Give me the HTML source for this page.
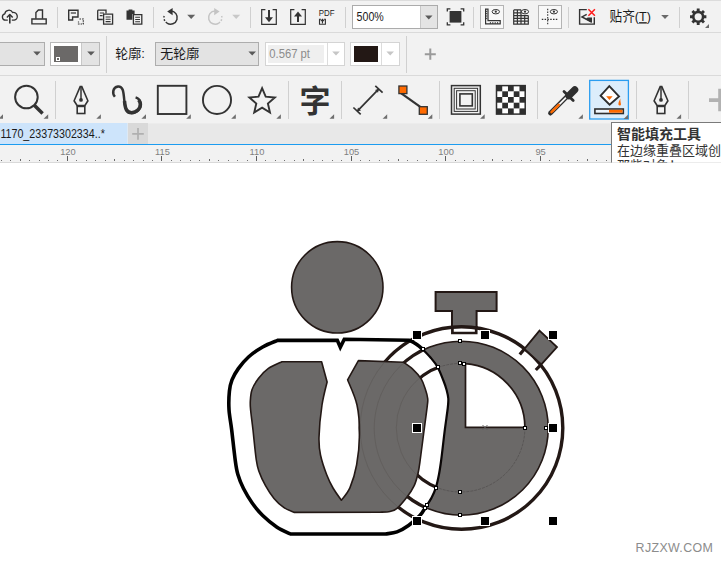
<!DOCTYPE html>
<html lang="zh-CN"><head><meta charset="utf-8"><title>CorelDRAW</title>
<style>
html,body{margin:0;padding:0;background:#fff;}
body{width:721px;height:562px;overflow:hidden;position:relative;font-family:"Liberation Sans","Noto Sans CJK SC",sans-serif;}
svg{position:absolute;left:0;top:0;display:block;}
text{font-family:"Liberation Sans","Noto Sans CJK SC",sans-serif;}
.t{position:absolute;white-space:nowrap;line-height:1;}
</style></head>
<body>
<svg id="ui" width="721" height="562" viewBox="0 0 721 562">
<!-- ===== BACKGROUNDS ===== -->
<g shape-rendering="crispEdges">
<rect x="0" y="0" width="721" height="123" fill="#f2f2f2"/><rect x="0" y="0" width="721" height="1" fill="#dcdcdc"/>
<rect x="0" y="32" width="721" height="1" fill="#dadada"/>
<rect x="0" y="75" width="721" height="1" fill="#dadada"/>
<rect x="0" y="123" width="721" height="21" fill="#e8e8e8"/><rect x="0" y="123" width="721" height="1" fill="#ececec"/>
<rect x="0" y="123" width="128" height="21" fill="#cde4fb"/>
<rect x="127" y="123" width="1" height="21" fill="#dde9f5"/><rect x="128" y="123" width="20" height="21" fill="#d9d9d9"/>
<rect x="0" y="144" width="721" height="1" fill="#1c9cf0"/>
<rect x="0" y="145" width="721" height="17" fill="#f2f2f2"/>
<rect x="0" y="162" width="721" height="1" fill="#d9d9d9"/>
</g>
<!-- ===== ROW1 ===== -->
<g id="row1">
<g fill="none" stroke="#333" stroke-width="1.3" stroke-linejoin="round"><path d="M7.8,20.2 H5.6 A3.2,3.2 0 0 1 4.8,13.9 A4.1,4.1 0 0 1 12.6,12.6 A3.8,3.8 0 0 1 14.2,20.2 H11.8"/><path d="M9.8,23.4 V15" stroke-width="1.6"/><path d="M6.9,17.6 L9.8,14.6 L12.7,17.6" stroke-width="1.5"/></g>
<g fill="none" stroke="#333" stroke-width="1.4" stroke-linejoin="miter"><path d="M35.9,18.8 V12.6 L38.4,10 H42.5 V18.8"/><path d="M31.9,19 H46.2 V23.9 H31.9 Z"/></g>
<rect x="57" y="7" width="1" height="21" fill="#d0d0d0" shape-rendering="crispEdges"/>
<g fill="none" stroke="#333" stroke-width="1.4"><path d="M68.7,10.2 H78 V17 H72.6 V20 H68.7 Z"/><path d="M70.8,13 H76" stroke-width="1.2"/><path d="M79.5,19 H83.3 V24 H78.5 V21.5" stroke-dasharray="1.5 1" stroke-width="1.2"/></g>
<g fill="none" stroke="#333" stroke-width="1.3"><path d="M97.7,10.2 H106 V13.5 M97.7,10.2 V19.5 H102.8"/><path d="M99.8,13 H104 M99.8,15.6 H102.6" stroke-width="1.1"/><path d="M103.6,14.2 H112.6 V24.2 H103.6 Z"/><path d="M105.6,17 H110.6 M105.6,19.3 H110.6 M105.6,21.6 H110.6" stroke-width="1.1"/></g>
<path d="M126.5,10.6 H128.6 V9.6 H132.4 V10.6 H134.6 V14 H132.4 V19.8 H126.5 Z" fill="#333"/><g fill="none" stroke="#333" stroke-width="1.3"><path d="M133.4,14.6 H141.8 V24.2 H133.4 Z"/><path d="M135.2,17.2 H140 M135.2,19.5 H140 M135.2,21.8 H140" stroke-width="1.1"/></g>
<rect x="153" y="7" width="1" height="21" fill="#d0d0d0" shape-rendering="crispEdges"/>
<g fill="none" stroke="#333" stroke-width="1.45"><path d="M170.6,11 A6.6,6.6 0 1 1 167,23.1"/><path d="M167,23.1 A6.6,6.6 0 0 1 164.3,15.4" stroke-dasharray="1.6 1.6"/></g><path d="M167.2,11.6 L172.6,8 V15.2 Z" fill="#333"/>
<path d="M187.2,14.799999999999999 h8 l-4.0,4.2 Z" fill="#626262"/>
<g fill="none" stroke="#c4c4c4" stroke-width="1.45"><path d="M215.2,11 A6.6,6.6 0 1 0 218.8,23.1"/><path d="M218.8,23.1 A6.6,6.6 0 0 0 221.5,15.4" stroke-dasharray="1.6 1.6"/></g><path d="M219.6,11.6 L214.2,8 V15.2 Z" fill="#c4c4c4"/>
<path d="M232.2,14.799999999999999 h8 l-4.0,4.2 Z" fill="#c8c8c8"/>
<rect x="250" y="7" width="1" height="21" fill="#d0d0d0" shape-rendering="crispEdges"/>
<g fill="none" stroke="#333"><path d="M265.4,9.6 H261.7 V24.4 H276.3 V9.6 H272.6" stroke-width="1.2"/><path d="M269,10 V19" stroke-width="2"/></g><path d="M265,17.2 H273 L269,22.2 Z" fill="#333"/>
<g fill="none" stroke="#333"><path d="M294.4,9.6 H290.7 V24.4 H305.3 V9.6 H301.6" stroke-width="1.2"/><path d="M298,15 V22" stroke-width="2"/></g><path d="M294,16.6 H302 L298,11.6 Z" fill="#333"/>
<text x="318.8" y="15.7" font-size="8.2" fill="#222" textLength="15.8" lengthAdjust="spacingAndGlyphs">PDF</text>
<g fill="none" stroke="#333" stroke-width="1.1"><path d="M321,19.3 H319.5 V24.2 H325.4 V19.3 H323.9"/><path d="M322.45,23.4 V19.6 M320.8,21.2 L322.45,19.4 L324.1,21.2"/></g>
<rect x="345" y="7" width="1" height="21" fill="#d0d0d0" shape-rendering="crispEdges"/>
<g shape-rendering="crispEdges"><rect x="352.5" y="5.5" width="85" height="23" fill="#fff" stroke="#ababab"/><rect x="420" y="6" width="17" height="22" fill="#e4e4e4"/><rect x="419.5" y="6" width="1" height="22" fill="#c8c8c8"/></g>
<text x="356.6" y="21.3" font-size="12.3" fill="#1a1a1a" textLength="27.2" lengthAdjust="spacingAndGlyphs">500%</text>
<path d="M425.1,15.399999999999999 h7.4 l-3.7,4 Z" fill="#5a5a5a"/>
<rect x="449.6" y="11" width="11.8" height="11.6" fill="#333"/><path d="M447.3,11.4 V8.8 H450.4 M460.6,8.8 H463.7 V11.4 M463.7,22.2 V24.8 H460.6 M450.4,24.8 H447.3 V22.2" fill="none" stroke="#333" stroke-width="1.3"/>
<rect x="473" y="7" width="1" height="21" fill="#d0d0d0" shape-rendering="crispEdges"/>
<rect x="480.5" y="5.5" width="23" height="23" fill="#f8f8f8" stroke="#b4b4b4" shape-rendering="crispEdges"/>
<g fill="none" stroke="#333"><path d="M485.6,9.2 H488 V20.6 H500.2 V23.8 H485.6 Z" stroke-width="1.2"/><path d="M490.4,23.8 v-1.8 M492.8,23.8 v-1.8 M495.2,23.8 v-1.8 M497.6,23.8 v-1.8 M485.6,18.4 h1.6 M485.6,16 h1.6 M485.6,13.6 h1.6 M485.6,11.4 h1.6" stroke-width="0.9"/><ellipse cx="495.8" cy="11.7" rx="3.7" ry="2.2" stroke-width="1"/></g><circle cx="495.8" cy="11.7" r="1.1" fill="#333"/>
<g fill="none" stroke="#333" stroke-width="1.2"><path d="M513.7,9.9 V24.1 H528.3 V15.6 M513.7,12.8 H521.2 M513.7,15.6 H528.3 M513.7,18.4 H528.3 M513.7,21.2 H528.3 M513.7,9.9 H521.2 M517.4,9.9 V24.1 M521,9.9 V24.1 M524.7,15.6 V24.1"/><ellipse cx="525" cy="11.7" rx="3.6" ry="2.2" stroke-width="1"/></g><circle cx="525" cy="11.7" r="1.1" fill="#333"/>
<rect x="538.5" y="5.5" width="23" height="23" fill="#f8f8f8" stroke="#b4b4b4" shape-rendering="crispEdges"/>
<g fill="none" stroke="#333" stroke-width="1.1"><path d="M547.7,8.7 V25" stroke-dasharray="1.5 1.3"/><path d="M541.8,19.4 H558.4" stroke-dasharray="1.5 1.3"/><ellipse cx="553.9" cy="11.7" rx="3.6" ry="2.2" stroke-width="1"/></g><circle cx="553.9" cy="11.7" r="1.1" fill="#333"/>
<rect x="568" y="7" width="1" height="21" fill="#d0d0d0" shape-rendering="crispEdges"/>
<g fill="none" stroke="#333" stroke-width="1.4"><path d="M586.8,9.6 H579.6 V24.1 H594.3 V17.2"/><path d="M586.7,14.4 L582,16.9 L591.6,22" stroke-width="1.5"/></g><path d="M587.6,17.6 H592 V22.8 L585.6,19.2 Z" fill="#333"/><path d="M588.4,9.2 L594.9,15.7 M594.9,9.2 L588.4,15.7" stroke="#ff1a1a" stroke-width="1.5" fill="none"/>
<text x="609.6" y="21.2" font-size="13.4" fill="#1a1a1a" textLength="41.4" lengthAdjust="spacingAndGlyphs">贴齐(<tspan text-decoration="underline">T</tspan>)</text>
<path d="M661.2,15.0 h7.6 l-3.8,4 Z" fill="#6a6a6a"/>
<rect x="679" y="7" width="1" height="21" fill="#d0d0d0" shape-rendering="crispEdges"/>
<path d="M696.77,8.62 L699.63,8.62 L699.65,10.77 L701.44,11.51 L702.97,10.01 L704.99,12.03 L703.49,13.56 L704.23,15.35 L706.38,15.37 L706.38,18.23 L704.23,18.25 L703.49,20.04 L704.99,21.57 L702.97,23.59 L701.44,22.09 L699.65,22.83 L699.63,24.98 L696.77,24.98 L696.75,22.83 L694.96,22.09 L693.43,23.59 L691.41,21.57 L692.91,20.04 L692.17,18.25 L690.02,18.23 L690.02,15.37 L692.17,15.35 L692.91,13.56 L691.41,12.03 L693.43,10.01 L694.96,11.51 L696.75,10.77 Z" fill="#333"/><circle cx="698.2" cy="16.8" r="3.6" fill="#f2f2f2"/>
<path d="M709,28 L705,28 L709,24 Z" fill="#6a6a6a"/>
</g><!--/row1-->
<!-- ===== ROW2 ===== -->
<g id="row2">
<g shape-rendering="crispEdges"><rect x="-1.5" y="42.5" width="46" height="23" fill="#e3e3e3" stroke="#adadad"/><rect x="50.5" y="42.5" width="49" height="23" fill="#fff" stroke="#b8b8b8"/><rect x="81" y="43" width="18" height="22" fill="#e3e3e3"/><rect x="81" y="43" width="1" height="22" fill="#c8c8c8"/><rect x="54" y="46" width="24" height="16" fill="#6b6968"/><rect x="56.5" y="57.5" width="3" height="3" fill="#6b6968" stroke="#fff"/><rect x="155.5" y="42.5" width="103" height="23" fill="#e3e3e3" stroke="#adadad"/><rect x="265.5" y="42.5" width="79" height="23" fill="#fff" stroke="#d4d4d4"/><rect x="268" y="45" width="56" height="18" fill="#efefef"/><rect x="327" y="43" width="1" height="22" fill="#dcdcdc"/><rect x="350.5" y="42.5" width="49" height="23" fill="#fff" stroke="#d4d4d4"/><rect x="354" y="46" width="24" height="16" fill="#231815"/><rect x="381" y="43" width="1" height="22" fill="#dcdcdc"/></g>
<path d="M33.2,51.4 h7.6 l-3.8,4 Z" fill="#5a5a5a"/>
<path d="M87.2,51.4 h7.6 l-3.8,4 Z" fill="#5a5a5a"/>
<rect x="106" y="36" width="1" height="37" fill="#d0d0d0" shape-rendering="crispEdges"/>
<text x="115.2" y="58.2" font-size="13" fill="#1a1a1a">轮廓:</text>
<text x="160.2" y="58.2" font-size="13" fill="#1a1a1a">无轮廓</text>
<path d="M248.39999999999998,51.4 h7.6 l-3.8,4 Z" fill="#5a5a5a"/>
<text x="269.3" y="58" font-size="12.3" fill="#8c8c8c" textLength="40.7" lengthAdjust="spacingAndGlyphs">0.567 pt</text>
<path d="M332.2,51.4 h7.6 l-3.8,4 Z" fill="#c6c6c6"/>
<path d="M386.4,51.4 h7.6 l-3.8,4 Z" fill="#c6c6c6"/>
<rect x="406" y="36" width="1" height="37" fill="#d0d0d0" shape-rendering="crispEdges"/>
<path d="M424.8,54.2 H435.8 M430.3,48.6 V59.8" stroke="#9a9a9a" stroke-width="2" fill="none"/>
</g><!--/row2-->
<!-- ===== ROW3 ===== -->
<g id="row3">
<path d="M3,118.8 L-1.5999999999999996,118.8 L3,114.2 Z" fill="#6e6e6e"/>
<circle cx="26.4" cy="97" r="11.3" fill="none" stroke="#333" stroke-width="2"/><path d="M34.3,105.2 L42.6,113.5" stroke="#333" stroke-width="3.5" fill="none"/>
<path d="M48.2,118.8 L43.6,118.8 L48.2,114.2 Z" fill="#6e6e6e"/>
<rect x="55" y="81" width="1" height="38" fill="#d0d0d0" shape-rendering="crispEdges"/>
<g fill="none" stroke="#333" stroke-width="1.6" stroke-linejoin="miter"><path d="M80.2,86.6 H81.8 L87.9,100.8 L84.8,105.6 H77.2 L74.1,100.8 Z"/><path d="M81.0,86.6 V99" stroke-width="1.5"/><rect x="77.2" y="106.4" width="7.6" height="7.1" /></g><circle cx="81.0" cy="99.9" r="1.9" fill="#333"/>
<path d="M100.9,118.8 L96.30000000000001,118.8 L100.9,114.2 Z" fill="#6e6e6e"/>
<path d="M114.9,96.8 C112.2,93.6 112.4,87.2 118,86.4 C122.8,86 123.4,91.4 124,97.4 C124.6,104 125.2,112.9 131.6,112.9 C137.4,112.9 141.6,108 140.8,103.2 C140.2,100.2 138.2,98.2 135.6,97.4" fill="none" stroke="#333" stroke-width="2.5"/><path d="M124.5,101 C125.2,109.4 126.8,112.7 131.6,112.7 C136.6,112.7 140.4,108.6 140.3,104.2 C140.2,102.4 139.6,101 138.6,99.8" fill="none" stroke="#333" stroke-width="3.5"/>
<path d="M146,118.8 L141.4,118.8 L146,114.2 Z" fill="#6e6e6e"/>
<rect x="157.8" y="85.8" width="28.6" height="28.2" fill="none" stroke="#333" stroke-width="1.9"/>
<path d="M190.8,118.8 L186.20000000000002,118.8 L190.8,114.2 Z" fill="#6e6e6e"/>
<circle cx="217" cy="99.9" r="14.05" fill="none" stroke="#333" stroke-width="1.9"/>
<path d="M235.8,118.8 L231.20000000000002,118.8 L235.8,114.2 Z" fill="#6e6e6e"/>
<path d="M262.10,88.20 L265.69,96.66 L274.84,97.46 L267.90,103.49 L269.98,112.44 L262.10,107.70 L254.22,112.44 L256.30,103.49 L249.36,97.46 L258.51,96.66 Z" fill="none" stroke="#333" stroke-width="1.9" stroke-linejoin="miter" stroke-miterlimit="3"/>
<path d="M280.9,118.8 L276.29999999999995,118.8 L280.9,114.2 Z" fill="#6e6e6e"/>
<rect x="288" y="81" width="1" height="38" fill="#d0d0d0" shape-rendering="crispEdges"/>
<text x="299.4" y="111.6" font-size="31" font-weight="bold" fill="#333">字</text>
<path d="M334.1,118.8 L329.5,118.8 L334.1,114.2 Z" fill="#6e6e6e"/>
<rect x="341" y="81" width="1" height="38" fill="#d0d0d0" shape-rendering="crispEdges"/>
<path d="M357.6,110.9 L378.4,89.4 M353.4,107.5 L360.7,114.4 M375.3,85.9 L382.6,92.6" fill="none" stroke="#333" stroke-width="1.7"/><path d="M357,111.6 L358,107.6 L361,110.4 Z M379,88.8 L378,92.8 L375,90 Z" fill="#333"/>
<path d="M387.2,118.8 L382.59999999999997,118.8 L387.2,114.2 Z" fill="#6e6e6e"/>
<path d="M400.6,92.8 L421,107.4" stroke="#333" stroke-width="2.2" fill="none"/><rect x="398.9" y="86" width="8" height="7.6" fill="#ff6a00" stroke="#333" stroke-width="1.3"/><rect x="419.3" y="106.7" width="8" height="7.6" fill="#ff6a00" stroke="#333" stroke-width="1.3"/>
<path d="M432.3,118.8 L427.7,118.8 L432.3,114.2 Z" fill="#6e6e6e"/>
<rect x="439" y="81" width="1" height="38" fill="#d0d0d0" shape-rendering="crispEdges"/>
<g fill="none" stroke="#333"><rect x="451.5" y="85.6" width="28.8" height="28.5" stroke-width="1.5"/><rect x="454.2" y="88.3" width="23.4" height="23.1" stroke-width="1"/><rect x="456.6" y="90.7" width="18.6" height="18.3" stroke-width="1"/><rect x="459.9" y="93.9" width="12.4" height="12" stroke-width="1.6"/></g>
<path d="M484.7,118.8 L480.09999999999997,118.8 L484.7,114.2 Z" fill="#6e6e6e"/>
<rect x="496.5" y="85.6" width="28.7" height="28.5" fill="#fff" stroke="#2e2e2e" stroke-width="1.5"/><rect x="496.50" y="85.60" width="5.74" height="5.70" fill="#2e2e2e"/><rect x="496.50" y="97.00" width="5.74" height="5.70" fill="#2e2e2e"/><rect x="496.50" y="108.40" width="5.74" height="5.70" fill="#2e2e2e"/><rect x="502.24" y="91.30" width="5.74" height="5.70" fill="#2e2e2e"/><rect x="502.24" y="102.70" width="5.74" height="5.70" fill="#2e2e2e"/><rect x="507.98" y="85.60" width="5.74" height="5.70" fill="#2e2e2e"/><rect x="507.98" y="97.00" width="5.74" height="5.70" fill="#2e2e2e"/><rect x="507.98" y="108.40" width="5.74" height="5.70" fill="#2e2e2e"/><rect x="513.72" y="91.30" width="5.74" height="5.70" fill="#2e2e2e"/><rect x="513.72" y="102.70" width="5.74" height="5.70" fill="#2e2e2e"/><rect x="519.46" y="85.60" width="5.74" height="5.70" fill="#2e2e2e"/><rect x="519.46" y="97.00" width="5.74" height="5.70" fill="#2e2e2e"/><rect x="519.46" y="108.40" width="5.74" height="5.70" fill="#2e2e2e"/>
<rect x="537" y="81" width="1" height="38" fill="#d0d0d0" shape-rendering="crispEdges"/>
<g><path d="M550.4,113.2 L567.4,96.2" stroke="#2e2e2e" stroke-width="4.6" stroke-linecap="round"/><path d="M552.6,111 L567,96.6" stroke="#f6f6f6" stroke-width="1.8"/><path d="M551.4,112.2 L558.8,104.8" stroke="#ff6a00" stroke-width="2.4" stroke-linecap="round"/><path d="M564,91.4 L573.2,100.6" stroke="#2e2e2e" stroke-width="2.8" stroke-linecap="round"/><path d="M568.8,95.8 L574.8,89.8" stroke="#2e2e2e" stroke-width="7" stroke-linecap="round"/></g>
<path d="M582.9,118.8 L578.3,118.8 L582.9,114.2 Z" fill="#6e6e6e"/>
<rect x="589.7" y="80.4" width="38.7" height="38.6" fill="#dcedfb" stroke="#2a9df0" stroke-width="1.3"/>
<g><path d="M609.3,86.2 L619,96.4 L609.6,104.6 L600.6,95.6 Z" fill="#fff" stroke="#2e2e2e" stroke-width="1.9" stroke-linejoin="miter"/><path d="M606.2,96.2 H612.6 L609.4,100 Z" fill="#ff6a00"/><path d="M620.4,98.4 C619.4,100.4 618.2,102.4 618.4,104.6 C619,106 621,105.6 621,104.2 C620.6,102 620.2,100.4 620.4,98.4 Z" fill="#ff6a00"/><rect x="594.9" y="109" width="28.4" height="4.5" fill="#eef6fd" stroke="#2e2e2e" stroke-width="1.6"/><rect x="609" y="109.8" width="13.5" height="2.9" fill="#ff6a00"/></g>
<path d="M628.2,119 L623.6,119 L628.2,114.4 Z" fill="#6e6e6e"/>
<rect x="636" y="81" width="1" height="38" fill="#d0d0d0" shape-rendering="crispEdges"/>
<g fill="none" stroke="#333" stroke-width="1.6" stroke-linejoin="miter"><path d="M660.2,86.6 H661.8 L667.9,100.8 L664.8,105.6 H657.2 L654.1,100.8 Z"/><path d="M661.0,86.6 V99" stroke-width="1.5"/><rect x="657.2" y="106.4" width="7.6" height="7.1" /></g><circle cx="661.0" cy="99.9" r="1.9" fill="#333"/>
<path d="M681.1,118.8 L676.5,118.8 L681.1,114.2 Z" fill="#6e6e6e"/>
<rect x="688" y="81" width="1" height="38" fill="#d0d0d0" shape-rendering="crispEdges"/>
<path d="M709,100.1 H721 M720,88.7 V111.2" stroke="#b2b2b2" stroke-width="3.6" fill="none"/>
<text x="0.4" y="137.8" font-size="12" fill="#1a1a1a" textLength="104.4" lengthAdjust="spacingAndGlyphs">1170_23373302334..*</text>
<path d="M132.2,133.9 H143.8 M138,128.1 V139.7" stroke="#b0b0b0" stroke-width="1.7" fill="none"/>
</g><!--/row3-->
<!-- ===== RULER ===== -->
<g id="ruler">
<g shape-rendering="crispEdges"><rect x="1" y="160" width="1" height="1" fill="#707070"/><rect x="10" y="160" width="1" height="1" fill="#707070"/><rect x="20" y="159" width="1" height="2" fill="#6a6a6a"/><rect x="29" y="160" width="1" height="1" fill="#707070"/><rect x="39" y="160" width="1" height="1" fill="#707070"/><rect x="48" y="160" width="1" height="1" fill="#707070"/><rect x="57" y="160" width="1" height="1" fill="#707070"/><rect x="67" y="156" width="1" height="5" fill="#5e5e5e"/><rect x="76" y="160" width="1" height="1" fill="#707070"/><rect x="86" y="160" width="1" height="1" fill="#707070"/><rect x="95" y="160" width="1" height="1" fill="#707070"/><rect x="105" y="160" width="1" height="1" fill="#707070"/><rect x="114" y="159" width="1" height="2" fill="#6a6a6a"/><rect x="124" y="160" width="1" height="1" fill="#707070"/><rect x="133" y="160" width="1" height="1" fill="#707070"/><rect x="143" y="160" width="1" height="1" fill="#707070"/><rect x="152" y="160" width="1" height="1" fill="#707070"/><rect x="161" y="156" width="1" height="5" fill="#5e5e5e"/><rect x="171" y="160" width="1" height="1" fill="#707070"/><rect x="180" y="160" width="1" height="1" fill="#707070"/><rect x="190" y="160" width="1" height="1" fill="#707070"/><rect x="199" y="160" width="1" height="1" fill="#707070"/><rect x="209" y="159" width="1" height="2" fill="#6a6a6a"/><rect x="218" y="160" width="1" height="1" fill="#707070"/><rect x="228" y="160" width="1" height="1" fill="#707070"/><rect x="237" y="160" width="1" height="1" fill="#707070"/><rect x="247" y="160" width="1" height="1" fill="#707070"/><rect x="256" y="156" width="1" height="5" fill="#5e5e5e"/><rect x="265" y="160" width="1" height="1" fill="#707070"/><rect x="275" y="160" width="1" height="1" fill="#707070"/><rect x="284" y="160" width="1" height="1" fill="#707070"/><rect x="294" y="160" width="1" height="1" fill="#707070"/><rect x="303" y="159" width="1" height="2" fill="#6a6a6a"/><rect x="313" y="160" width="1" height="1" fill="#707070"/><rect x="322" y="160" width="1" height="1" fill="#707070"/><rect x="332" y="160" width="1" height="1" fill="#707070"/><rect x="341" y="160" width="1" height="1" fill="#707070"/><rect x="351" y="156" width="1" height="5" fill="#5e5e5e"/><rect x="360" y="160" width="1" height="1" fill="#707070"/><rect x="369" y="160" width="1" height="1" fill="#707070"/><rect x="379" y="160" width="1" height="1" fill="#707070"/><rect x="388" y="160" width="1" height="1" fill="#707070"/><rect x="398" y="159" width="1" height="2" fill="#6a6a6a"/><rect x="407" y="160" width="1" height="1" fill="#707070"/><rect x="417" y="160" width="1" height="1" fill="#707070"/><rect x="426" y="160" width="1" height="1" fill="#707070"/><rect x="436" y="160" width="1" height="1" fill="#707070"/><rect x="445" y="156" width="1" height="5" fill="#5e5e5e"/><rect x="455" y="160" width="1" height="1" fill="#707070"/><rect x="464" y="160" width="1" height="1" fill="#707070"/><rect x="473" y="160" width="1" height="1" fill="#707070"/><rect x="483" y="160" width="1" height="1" fill="#707070"/><rect x="492" y="159" width="1" height="2" fill="#6a6a6a"/><rect x="502" y="160" width="1" height="1" fill="#707070"/><rect x="511" y="160" width="1" height="1" fill="#707070"/><rect x="521" y="160" width="1" height="1" fill="#707070"/><rect x="530" y="160" width="1" height="1" fill="#707070"/><rect x="540" y="156" width="1" height="5" fill="#5e5e5e"/><rect x="549" y="160" width="1" height="1" fill="#707070"/><rect x="559" y="160" width="1" height="1" fill="#707070"/><rect x="568" y="160" width="1" height="1" fill="#707070"/><rect x="577" y="160" width="1" height="1" fill="#707070"/><rect x="587" y="159" width="1" height="2" fill="#6a6a6a"/><rect x="596" y="160" width="1" height="1" fill="#707070"/><rect x="606" y="160" width="1" height="1" fill="#707070"/></g>
<text x="67.9" y="154.7" font-size="9.3" fill="#808080" text-anchor="middle">120</text>
<text x="162.4" y="154.7" font-size="9.3" fill="#808080" text-anchor="middle">115</text>
<text x="257.0" y="154.7" font-size="9.3" fill="#808080" text-anchor="middle">110</text>
<text x="351.5" y="154.7" font-size="9.3" fill="#808080" text-anchor="middle">105</text>
<text x="446.1" y="154.7" font-size="9.3" fill="#808080" text-anchor="middle">100</text>
<text x="540.6" y="154.7" font-size="9.3" fill="#808080" text-anchor="middle">95</text>
</g><!--/ruler-->
<!-- ===== TOOLTIP ===== -->
<g id="tip">
<defs><clipPath id="cpTip"><rect x="611" y="122" width="110" height="40.6"/></clipPath></defs>
<g clip-path="url(#cpTip)"><rect x="611.5" y="122.5" width="120" height="60" fill="#fff" stroke="#7a7a7a" shape-rendering="crispEdges"/><text x="617" y="139.2" font-size="14" font-weight="bold" fill="#333">智能填充工具</text><text x="617" y="155" font-size="13" fill="#333">在边缘重叠区域创</text><text x="617" y="170.4" font-size="13" fill="#333">那些对象！</text></g>
<text x="635.6" y="552.2" font-size="12.4" fill="#8c8c8c" textLength="77.2" lengthAdjust="spacing">RJZXW.COM</text>
</g><!--/tip-->
<!-- ===== ART ===== -->
<g id="art">
<defs><clipPath id="cpOut"><path d="M277.6,340.4 L337.3,340.4 L340.3,347.3 L344.3,339.2 L409.2,340.3 C409.8,340.6 411.3,341.2 412.7,342.0 C414.1,342.8 415.8,343.8 417.5,345.0 C419.2,346.2 421.8,348.5 422.7,349.2 C424.0,350.6 428.0,354.5 430.5,357.5 C433.0,360.5 435.6,363.4 437.7,367.2 C439.8,371.0 441.9,376.7 443.4,380.5 C444.9,384.3 445.8,387.0 446.6,390.0 C447.4,393.0 448.1,395.4 448.3,398.5 C448.5,401.6 448.3,403.3 447.7,408.5 C447.1,413.7 445.9,421.3 444.8,429.9 C443.7,438.5 442.2,452.6 441.2,460.0 C440.2,467.4 439.9,469.6 439.0,474.2 C438.1,478.8 437.1,483.8 435.8,487.8 C434.5,491.8 432.9,495.1 431.2,498.4 C429.4,501.7 426.3,506.1 425.3,507.7 C424.4,509.0 422.7,512.5 419.9,515.5 C417.1,518.5 412.3,522.8 408.5,525.5 C404.7,528.2 400.8,530.5 397.0,531.9 C393.2,533.3 387.6,533.6 385.7,534.0 L290.5,534.0 C288.2,532.9 281.6,530.3 277.0,527.2 C272.4,524.1 266.9,519.6 262.7,515.5 C258.5,511.4 255.2,507.2 252.0,502.7 C248.8,498.2 245.9,493.2 243.5,488.5 C241.1,483.8 239.2,478.9 237.8,474.2 C236.4,469.4 236.2,467.4 235.2,460.0 C234.2,452.6 232.7,438.4 231.7,430.0 C230.7,421.6 229.4,416.2 229.0,409.7 C228.6,403.2 228.9,396.2 229.4,391.2 C229.9,386.2 230.5,383.6 232.0,379.8 C233.5,376.0 235.8,372.2 238.5,368.4 C241.2,364.6 244.5,360.6 248.5,357.0 C252.5,353.4 257.8,349.8 262.7,347.0 C267.6,344.2 275.1,341.5 277.6,340.4 Z"/></clipPath><clipPath id="cpBody"><path d="M281.9,361.7 L321.6,361.7 L327.1,382.0 C326.2,385.8 323.4,395.7 322.0,405.0 C320.6,414.3 319.2,429.3 319.0,437.6 C318.8,445.9 319.2,448.8 320.5,455.0 C321.8,461.2 324.6,469.3 326.7,474.8 C328.8,480.3 330.6,483.8 333.0,488.0 C335.4,492.2 340.0,498.2 341.4,500.2 C342.8,498.1 347.5,493.5 350.0,487.6 C352.5,481.7 355.0,473.8 356.6,465.0 C358.2,456.2 359.4,444.6 359.5,434.6 C359.6,424.6 359.0,414.1 357.0,405.0 C355.0,395.9 349.2,384.0 347.6,379.8 L358.4,360.6 L403.5,362.3 C405.0,363.4 409.7,366.3 412.7,369.1 C415.7,371.9 419.1,375.6 421.3,379.1 C423.5,382.6 424.5,386.8 425.6,390.0 C426.7,393.2 427.4,395.9 427.7,398.5 C428.0,401.1 427.8,401.2 427.3,405.7 C426.8,410.2 425.6,418.7 424.7,425.6 C423.8,432.5 422.6,441.3 421.9,447.0 C421.1,452.7 420.8,455.7 420.2,460.0 C419.6,464.3 419.1,468.7 418.1,473.0 C417.1,477.3 416.1,481.6 414.2,485.6 C412.3,489.6 409.9,493.2 407.0,497.0 C404.1,500.8 399.8,506.0 397.0,508.4 C394.2,510.8 392.8,510.9 390.0,511.5 C387.2,512.1 381.7,512.1 380.0,512.2 L294.0,512.4 C292.3,511.6 287.3,510.0 284.0,507.7 C280.7,505.4 277.1,502.1 274.0,498.4 C270.9,494.7 268.0,490.1 265.5,485.6 C263.0,481.1 260.5,475.7 259.0,471.4 C257.5,467.1 257.3,466.9 256.3,460.0 C255.3,453.1 253.9,438.4 253.0,430.0 C252.1,421.6 251.0,414.5 250.6,409.7 C250.2,404.9 250.1,404.5 250.3,401.2 C250.5,397.9 250.7,393.6 252.0,389.8 C253.3,386.0 255.7,382.0 258.4,378.4 C261.1,374.8 264.5,371.2 268.4,368.4 C272.3,365.6 279.6,362.8 281.9,361.7 Z"/></clipPath></defs>
<circle cx="337.3" cy="287.3" r="45.7" fill="#6b6968" stroke="#231815" stroke-width="1.6"/>
<circle cx="461.2" cy="428.2" r="87" fill="#6b6968" stroke="#231815" stroke-width="1.6"/>
<circle cx="460.6" cy="427.7" r="64.3" fill="none" stroke="#474342" stroke-width="0.5" stroke-dasharray="3 1"/>
<path d="M465.5,427.3 L465.5,363.6 A64.3,64.3 0 0 1 524.9,427.3 Z" fill="#fff" stroke="#231815" stroke-width="1.7" stroke-linejoin="miter"/>
<path d="M435.6,292 H496.6 V311 H476.6 V327.5 H452 V311 H435.6 Z" fill="#6b6968" stroke="#231815" stroke-width="2"/>
<path d="M452.4,326 V333 H476.2 V326" fill="#fff" stroke="#231815" stroke-width="2.7"/>
<circle cx="461.5" cy="428" r="101.3" fill="none" stroke="#231815" stroke-width="3.4"/>
<path d="M519.8,354.5 L524.4,348.9 M535.8,370 L541.3,364.4" stroke="#231815" stroke-width="3.2" fill="none"/>
<path d="M539.5,330.6 L557,347 L541.3,364.4 L524.4,348.9 Z" fill="#6b6968" stroke="#231815" stroke-width="1.8"/>
<path d="M277.6,340.4 L337.3,340.4 L340.3,347.3 L344.3,339.2 L409.2,340.3 C409.8,340.6 411.3,341.2 412.7,342.0 C414.1,342.8 415.8,343.8 417.5,345.0 C419.2,346.2 421.8,348.5 422.7,349.2 C424.0,350.6 428.0,354.5 430.5,357.5 C433.0,360.5 435.6,363.4 437.7,367.2 C439.8,371.0 441.9,376.7 443.4,380.5 C444.9,384.3 445.8,387.0 446.6,390.0 C447.4,393.0 448.1,395.4 448.3,398.5 C448.5,401.6 448.3,403.3 447.7,408.5 C447.1,413.7 445.9,421.3 444.8,429.9 C443.7,438.5 442.2,452.6 441.2,460.0 C440.2,467.4 439.9,469.6 439.0,474.2 C438.1,478.8 437.1,483.8 435.8,487.8 C434.5,491.8 432.9,495.1 431.2,498.4 C429.4,501.7 426.3,506.1 425.3,507.7 C424.4,509.0 422.7,512.5 419.9,515.5 C417.1,518.5 412.3,522.8 408.5,525.5 C404.7,528.2 400.8,530.5 397.0,531.9 C393.2,533.3 387.6,533.6 385.7,534.0 L290.5,534.0 C288.2,532.9 281.6,530.3 277.0,527.2 C272.4,524.1 266.9,519.6 262.7,515.5 C258.5,511.4 255.2,507.2 252.0,502.7 C248.8,498.2 245.9,493.2 243.5,488.5 C241.1,483.8 239.2,478.9 237.8,474.2 C236.4,469.4 236.2,467.4 235.2,460.0 C234.2,452.6 232.7,438.4 231.7,430.0 C230.7,421.6 229.4,416.2 229.0,409.7 C228.6,403.2 228.9,396.2 229.4,391.2 C229.9,386.2 230.5,383.6 232.0,379.8 C233.5,376.0 235.8,372.2 238.5,368.4 C241.2,364.6 244.5,360.6 248.5,357.0 C252.5,353.4 257.8,349.8 262.7,347.0 C267.6,344.2 275.1,341.5 277.6,340.4 Z" fill="#fff"/>
<g clip-path="url(#cpOut)" fill="none" stroke="#231815" stroke-width="3.3"><circle cx="461.5" cy="428" r="101.3"/><circle cx="461.2" cy="428.2" r="87"/><circle cx="460.6" cy="427.7" r="64.3"/></g>
<path d="M281.9,361.7 L321.6,361.7 L327.1,382.0 C326.2,385.8 323.4,395.7 322.0,405.0 C320.6,414.3 319.2,429.3 319.0,437.6 C318.8,445.9 319.2,448.8 320.5,455.0 C321.8,461.2 324.6,469.3 326.7,474.8 C328.8,480.3 330.6,483.8 333.0,488.0 C335.4,492.2 340.0,498.2 341.4,500.2 C342.8,498.1 347.5,493.5 350.0,487.6 C352.5,481.7 355.0,473.8 356.6,465.0 C358.2,456.2 359.4,444.6 359.5,434.6 C359.6,424.6 359.0,414.1 357.0,405.0 C355.0,395.9 349.2,384.0 347.6,379.8 L358.4,360.6 L403.5,362.3 C405.0,363.4 409.7,366.3 412.7,369.1 C415.7,371.9 419.1,375.6 421.3,379.1 C423.5,382.6 424.5,386.8 425.6,390.0 C426.7,393.2 427.4,395.9 427.7,398.5 C428.0,401.1 427.8,401.2 427.3,405.7 C426.8,410.2 425.6,418.7 424.7,425.6 C423.8,432.5 422.6,441.3 421.9,447.0 C421.1,452.7 420.8,455.7 420.2,460.0 C419.6,464.3 419.1,468.7 418.1,473.0 C417.1,477.3 416.1,481.6 414.2,485.6 C412.3,489.6 409.9,493.2 407.0,497.0 C404.1,500.8 399.8,506.0 397.0,508.4 C394.2,510.8 392.8,510.9 390.0,511.5 C387.2,512.1 381.7,512.1 380.0,512.2 L294.0,512.4 C292.3,511.6 287.3,510.0 284.0,507.7 C280.7,505.4 277.1,502.1 274.0,498.4 C270.9,494.7 268.0,490.1 265.5,485.6 C263.0,481.1 260.5,475.7 259.0,471.4 C257.5,467.1 257.3,466.9 256.3,460.0 C255.3,453.1 253.9,438.4 253.0,430.0 C252.1,421.6 251.0,414.5 250.6,409.7 C250.2,404.9 250.1,404.5 250.3,401.2 C250.5,397.9 250.7,393.6 252.0,389.8 C253.3,386.0 255.7,382.0 258.4,378.4 C261.1,374.8 264.5,371.2 268.4,368.4 C272.3,365.6 279.6,362.8 281.9,361.7 Z" fill="#6b6968" stroke="#231815" stroke-width="1.6" stroke-linejoin="round"/>
<g clip-path="url(#cpBody)" fill="none" stroke="#55514f" stroke-width="0.4"><circle cx="461.5" cy="428" r="101.3"/><circle cx="461.2" cy="428.2" r="87"/><circle cx="460.6" cy="427.7" r="64.3"/></g>
<path d="M422.7,349.2 C424.0,350.6 428.0,354.5 430.5,357.5 C433.0,360.5 435.6,363.4 437.7,367.2 C439.8,371.0 441.9,376.7 443.4,380.5 C444.9,384.3 445.8,387.0 446.6,390.0 C447.4,393.0 448.1,395.4 448.3,398.5 C448.5,401.6 448.3,403.3 447.7,408.5 C447.1,413.7 445.9,421.3 444.8,429.9 C443.7,438.5 442.2,452.6 441.2,460.0 C440.2,467.4 439.9,469.6 439.0,474.2 C438.1,478.8 437.1,483.8 435.8,487.8 C434.5,491.8 432.9,495.1 431.2,498.4 C429.4,501.7 426.3,506.1 425.3,507.7 " fill="none" stroke="#0a0606" stroke-width="2.2"/>
<path d="M425.3,507.7 C424.4,509.0 422.7,512.5 419.9,515.5 C417.1,518.5 412.3,522.8 408.5,525.5 C404.7,528.2 400.8,530.5 397.0,531.9 C393.2,533.3 387.6,533.6 385.7,534.0 L290.5,534.0 C288.2,532.9 281.6,530.3 277.0,527.2 C272.4,524.1 266.9,519.6 262.7,515.5 C258.5,511.4 255.2,507.2 252.0,502.7 C248.8,498.2 245.9,493.2 243.5,488.5 C241.1,483.8 239.2,478.9 237.8,474.2 C236.4,469.4 236.2,467.4 235.2,460.0 C234.2,452.6 232.7,438.4 231.7,430.0 C230.7,421.6 229.4,416.2 229.0,409.7 C228.6,403.2 228.9,396.2 229.4,391.2 C229.9,386.2 230.5,383.6 232.0,379.8 C233.5,376.0 235.8,372.2 238.5,368.4 C241.2,364.6 244.5,360.6 248.5,357.0 C252.5,353.4 257.8,349.8 262.7,347.0 C267.6,344.2 275.1,341.5 277.6,340.4 L337.3,340.4 L340.3,347.3 L344.3,339.2 L409.2,340.3 C409.8,340.6 411.3,341.2 412.7,342.0 C414.1,342.8 415.8,343.8 417.5,345.0 C419.2,346.2 421.8,348.5 422.7,349.2 " fill="none" stroke="#000" stroke-width="3.6" stroke-linejoin="miter" stroke-miterlimit="10"/>
<path d="M482.5,425 l5,5 m0,-5 l-5,5" stroke="#5a5a5a" stroke-width="0.9" fill="none"/>
<g shape-rendering="crispEdges" fill="#fff" stroke="#000" stroke-width="1"><rect x="421.5" y="347.5" width="3" height="3"/><rect x="458.5" y="339.5" width="3" height="3"/><rect x="436.5" y="365.5" width="3" height="3"/><rect x="458.5" y="361.5" width="3" height="3"/><rect x="462.5" y="362.5" width="3" height="3"/><rect x="523.5" y="426.5" width="3" height="3"/><rect x="544.5" y="426.5" width="3" height="3"/><rect x="434.5" y="486.5" width="3" height="3"/><rect x="458.5" y="490.5" width="3" height="3"/><rect x="425.5" y="503.5" width="3" height="3"/><rect x="423.5" y="506.5" width="3" height="3"/><rect x="458.5" y="513.5" width="3" height="3"/></g>
<g shape-rendering="crispEdges" fill="#000" stroke="#fff" stroke-width="1"><rect x="412.5" y="330.5" width="9" height="9"/><rect x="480.5" y="330.5" width="9" height="9"/><rect x="548.5" y="330.5" width="9" height="9"/><rect x="412.5" y="423.5" width="9" height="9"/><rect x="548.5" y="423.5" width="9" height="9"/><rect x="412.5" y="516.5" width="9" height="9"/><rect x="480.5" y="516.5" width="9" height="9"/><rect x="548.5" y="516.5" width="9" height="9"/></g>
</g><!--/art-->
</svg>
</body></html>
